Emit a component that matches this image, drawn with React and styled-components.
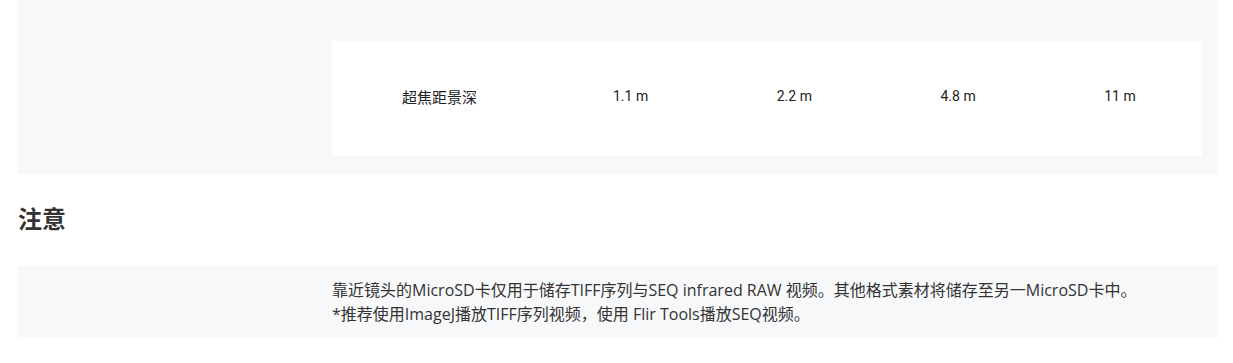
import React from "react";
import styled, { createGlobalStyle } from "styled-components";

const rows = [
  { label: "超焦距景深", values: ["1.1 m", "2.2 m", "4.8 m", "11 m"] }
];

const notes = [
  "靠近镜头的MicroSD卡仅用于储存TIFF序列与SEQ infrared RAW 视频。其他格式素材将储存至另一MicroSD卡中。",
  "*推荐使用ImageJ播放TIFF序列视频，使用 Flir Tools播放SEQ视频。"
];

const App = () => (
  <Page>
    <GlobalStyle />
    <Panel>
      <Side />
      <SpecTable>
        {rows.map(row => (
          <SpecRow key={row.label}>
            <LabelCell>{row.label}</LabelCell>
            {row.values.map(v => (
              <ValueCell key={v}>{v}</ValueCell>
            ))}
          </SpecRow>
        ))}
      </SpecTable>
    </Panel>
    <Heading>注意</Heading>
    <NotePanel>
      <Side />
      <NoteText>
        {notes.map(n => (
          <p key={n}>{n}</p>
        ))}
      </NoteText>
    </NotePanel>
  </Page>
);

export default App;

const GlobalStyle = createGlobalStyle`
  body {
    margin: 0;
    background: #fff;
    font-family: "Open Sans", "Noto Sans CJK SC", sans-serif;
    color: #333;
  }
`;

const Page = styled.div`
  width: 1200px;
  margin-left: 18px;
`;

const Panel = styled.div`
  display: grid;
  grid-template-columns: 314px 1fr;
  padding: 41px 16px 18px 0;
  background: #f7f8fa;
`;

const Side = styled.div``;

const SpecTable = styled.div`
  background: #fff;
`;

const SpecRow = styled.div`
  display: grid;
  grid-template-columns: 215px repeat(4, 1fr);
  align-items: center;
  height: 110px;
  padding-bottom: 5px;
  font-family: Roboto, "Noto Sans CJK SC", sans-serif;
  font-size: 15px;
  color: #222;
`;

const LabelCell = styled.div`
  text-align: center;
`;

const ValueCell = styled.div`
  padding-left: 66px;
  font-size: 14px;
`;

const Heading = styled.h2`
  margin: 27px 0 29px;
  font-size: 24px;
  line-height: 36px;
  font-weight: bold;
  color: #333;
`;

const NotePanel = styled.div`
  display: grid;
  grid-template-columns: 314px 1fr;
  padding: 12px 0 11px;
  background: #f7f8fa;
`;

const NoteText = styled.div`
  font-size: 16px;
  line-height: 24px;
  color: #333;
  p {
    margin: 0;
  }
`;
